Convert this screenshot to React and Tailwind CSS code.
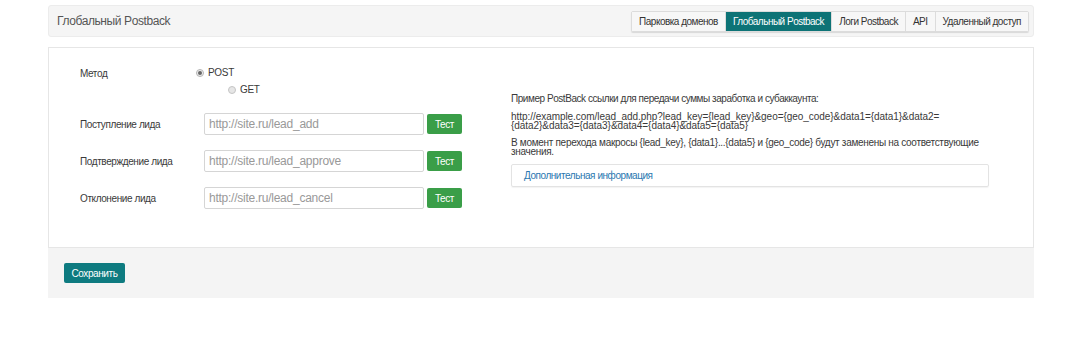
export default function App() {
  const font = { fontFamily: '"Liberation Sans", Arial, sans-serif' };
  const rows = [
    { label: "Поступление лида", ph: "http://site.ru/lead_add" },
    { label: "Подтверждение лида", ph: "http://site.ru/lead_approve" },
    { label: "Отклонение лида", ph: "http://site.ru/lead_cancel" },
  ];
  const tabs = ["Парковка доменов", "Глобальный Postback", "Логи Postback", "API", "Удаленный доступ"];
  return (
    <div className="w-[1080px] h-[338px] bg-white text-[#3a3a3a]" style={font}>
      <div className="ml-[48px] w-[986px] pt-[5px]">
        <div className="h-[32px] bg-[#f5f5f5] border border-[#ececec] rounded-[3px] flex items-center justify-between pl-[8px] pr-[4px]">
          <span className="text-[12px] text-[#555] tracking-[-0.4px]">Глобальный Postback</span>
          <div className="flex h-[21px] rounded-[2px] shadow-[0_1px_1px_rgba(0,0,0,0.12)] border border-[#dcdcdc]">
            {tabs.map((t, i) => (
              <div
                key={t}
                className={
                  "px-[7px] flex items-center text-[10px] tracking-[-0.5px] " +
                  (i === 1
                    ? "bg-[#0d7376] text-white"
                    : "bg-[#f7f7f7] text-[#333]") +
                  (i > 0 ? " border-l border-[#dcdcdc]" : "")
                }
              >
                {t}
              </div>
            ))}
          </div>
        </div>

        <div className="mt-[10px] border border-[#e6e6e6] bg-white h-[201px] flex">
          <div className="w-[440px] pl-[31px] pt-[17px]">
            <div className="flex">
              <div className="w-[116px] text-[10px] pt-[1px] tracking-[-0.4px]">Метод</div>
              <div className="text-[10px] tracking-[-0.3px]">
                <div className="flex items-center gap-[4px]">
                  <span className="w-[8px] h-[8px] rounded-full border border-[#b5b5b5] bg-[#eee] flex items-center justify-center">
                    <span className="w-[4px] h-[4px] rounded-full bg-[#666]" />
                  </span>
                  POST
                </div>
                <div className="flex items-center gap-[4px] ml-[32px] mt-[2px]">
                  <span className="w-[8px] h-[8px] rounded-full border border-[#c5c5c5] bg-[#e6e6e6]" />
                  GET
                </div>
              </div>
            </div>
            <div className="mt-[16px] flex flex-col gap-[15px]">
              {rows.map((r) => (
                <div key={r.label} className="flex items-center">
                  <div className="w-[124px] text-[10px] tracking-[-0.4px]">{r.label}</div>
                  <div className="w-[220px] h-[22px] border border-[#d5d5d5] rounded-[2px] flex items-center px-[4px] text-[12px] text-[#999] tracking-[-0.25px]">
                    {r.ph}
                  </div>
                  <div className="ml-[3px] w-[35px] h-[20px] bg-[#3a9e48] rounded-[2px] text-white text-[10px] tracking-[-0.4px] flex items-center justify-center">
                    Тест
                  </div>
                </div>
              ))}
            </div>
          </div>
          <div className="pl-[22px] pt-[46px] w-[540px] text-[10px] leading-[9px] whitespace-nowrap">
            <div className="tracking-[-0.45px]">Пример PostBack ссылки для передачи суммы заработка и субаккаунта:</div>
            <div className="mt-[9px] tracking-[-0.05px]">
              http://example.com/lead_add.php?lead_key={"{lead_key}"}&amp;geo={"{geo_code}"}&amp;data1={"{data1}"}&amp;data2=
              <br />
              {"{data2}"}&amp;data3={"{data3}"}&amp;data4={"{data4}"}&amp;data5={"{data5}"}
            </div>
            <div className="mt-[8px] tracking-[-0.3px]">
              В момент перехода макросы {"{lead_key}"}, {"{data1}"}...{"{data5}"} и {"{geo_code}"} будут заменены на соответствующие
              <br />
              значения.
            </div>
            <div className="mt-[8px] w-[478px] h-[23px] border border-[#e3e3e3] rounded-[2px] flex items-center pl-[12px] text-[#2a78b0] tracking-[-0.45px] shadow-[0_1px_1px_rgba(0,0,0,0.05)]">
              Дополнительная информация
            </div>
          </div>
        </div>

        <div className="h-[50px] bg-[#f4f4f4] flex items-center pl-[16px]">
          <div className="w-[61px] h-[20px] bg-[#0e7b80] rounded-[2px] text-white text-[10px] tracking-[-0.4px] flex items-center justify-center">
            Сохранить
          </div>
        </div>
      </div>
    </div>
  );
}
